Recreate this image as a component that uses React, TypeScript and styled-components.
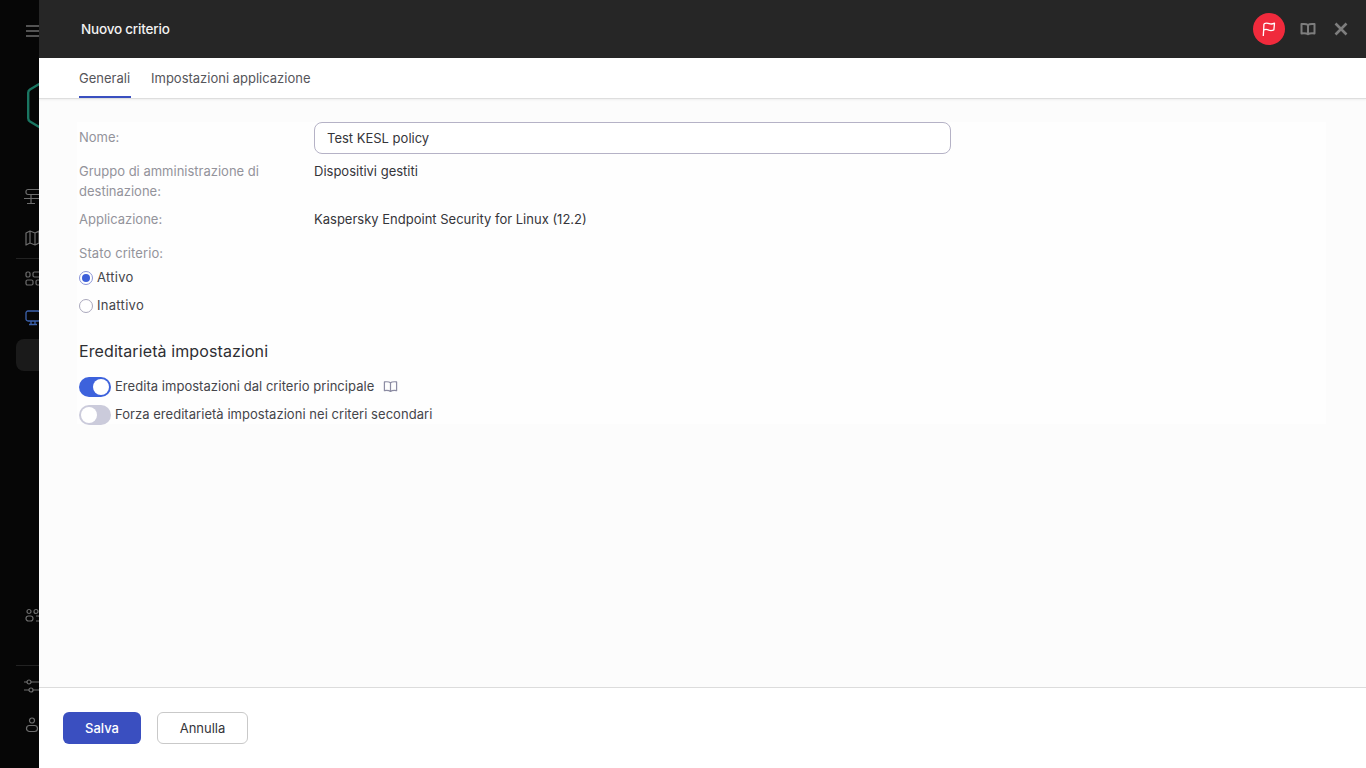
import React from "react";
import styled, { createGlobalStyle } from "styled-components";

const GlobalStyle = createGlobalStyle`
  html, body {
    margin: 0;
    padding: 0;
    height: 100%;
    overflow: hidden;
    background: #060606;
  }
  body {
    font-family: Inter, "Liberation Sans", sans-serif;
    font-size: 14px;
    line-height: 20px;
    color: #2a2a2e;
  }
  * { box-sizing: border-box; }
`;

const BookIcon = ({
  size = 16,
  color = "#7d7d7d",
  weight = 1.3,
}: {
  size?: number;
  color?: string;
  weight?: number;
}) => (
  <svg width={size} height={size} viewBox="0 0 16 16" fill="none" stroke={color} strokeWidth={weight}>
    <path d="M8 4C6.800 3 4 2.800 1.500 3.100v9.300C4 12.100 6.800 12.300 8 13.300c1.200-1 4-1.200 6.500-.9V3.100C12 2.800 9.200 3 8 4Z" strokeLinejoin="round" />
    <path d="M8 4v9.300" />
  </svg>
);

const FlagIcon = () => (
  <svg width="16" height="16" viewBox="0 0 16 16" fill="none" stroke="#fff" strokeWidth="1.300" strokeLinejoin="round">
    <path d="M2.300 15 3 2.800" />
    <path d="M3 2.800c2-1.200 3.600-.9 5.200-.2 1.700.7 3.400.5 5.300-.4l-.6 6.600c-1.900.9-3.500 1-5.100.3-1.700-.8-3.400-1-5.100-.1" />
  </svg>
);

const App = () => (
  <>
    <GlobalStyle />
    <Page>
      <Rail>
        <RailTop>
          <RailIcon $top={22}>
            <svg width="18" height="18" viewBox="0 0 18 18" stroke="#6e6e6e" strokeWidth="1.300">
              <path d="M2 4h14M2 9h14M2 14h14" />
            </svg>
          </RailIcon>
          <Logo>
            <svg width="36" height="54" viewBox="0 0 36 54" fill="none" stroke="#1a7561" strokeWidth="2.400">
              <path d="M26 -3 5 9.500a4 4 0 0 0-1.800 3.300v25.400a4 4 0 0 0 1.800 3.300L26 54" />
            </svg>
          </Logo>
          <RailIcon $top={58}>
            <svg width="18" height="18" viewBox="0 0 18 18" fill="none" stroke="#6e6e6e" strokeWidth="1.200">
              <rect x="2" y="1.500" width="16" height="5" rx="2" />
              <path d="M7 6.500v9M0 10.500h18M3 15.500h8" />
            </svg>
          </RailIcon>
          <RailIcon $top={23}>
            <svg width="18" height="18" viewBox="0 0 18 18" fill="none" stroke="#6e6e6e" strokeWidth="1.200">
              <path d="M2 4l4-2 5 2 4-2v12l-4 2-5-2-4 2ZM6 2v12M11 4v12" strokeLinejoin="round" />
            </svg>
          </RailIcon>
          <RailDivider $top={11} />
          <RailIcon $top={11}>
            <svg width="18" height="18" viewBox="0 0 18 18" fill="none" stroke="#6e6e6e" strokeWidth="1.200">
              <rect x="2" y="2" width="4" height="5" rx="1.500" />
              <rect x="9" y="2" width="8" height="5" rx="1.500" />
              <rect x="2" y="10" width="7" height="5" rx="1.500" />
              <rect x="12" y="10" width="5" height="5" rx="1.500" />
            </svg>
          </RailIcon>
          <RailIcon $top={21}>
            <svg width="18" height="18" viewBox="0 0 18 18" fill="none" stroke="#3c62ad" strokeWidth="1.300">
              <rect x="2" y="2" width="14" height="10" rx="2" />
              <path d="M7 12v3M11 12v3M5 15.500h8" />
            </svg>
          </RailIcon>
          <RailSelected />
        </RailTop>
        <RailBottom>
          <RailIcon $top={0}>
            <svg width="18" height="18" viewBox="0 0 18 18" fill="none" stroke="#6e6e6e" strokeWidth="1.200">
              <circle cx="5" cy="4.500" r="2" />
              <circle cx="12" cy="4.500" r="2" />
              <rect x="2" y="9" width="7" height="5" rx="2.500" />
              <path d="M12 9h2a2.500 2.500 0 0 1 0 5h-2" />
            </svg>
          </RailIcon>
          <RailDivider $top={40} />
          <RailIcon $top={11}>
            <svg width="18" height="18" viewBox="0 0 18 18" fill="none" stroke="#6e6e6e" strokeWidth="1.200">
              <path d="M0 5h3M7 5h11M0 13h5M9 13h9" />
              <circle cx="5" cy="5" r="2" />
              <circle cx="7" cy="13" r="2" />
            </svg>
          </RailIcon>
          <RailIcon $top={21}>
            <svg width="18" height="18" viewBox="0 0 18 18" fill="none" stroke="#6e6e6e" strokeWidth="1.200">
              <circle cx="8" cy="4.500" r="2.500" />
              <rect x="2.500" y="9.500" width="11" height="6" rx="3" />
            </svg>
          </RailIcon>
        </RailBottom>
      </Rail>
      <Drawer>
        <Header>
          <Title>Nuovo criterio</Title>
          <HeaderActions>
            <FlagButton>
              <FlagIcon />
            </FlagButton>
            <BookIcon size={16} color="#7d7d7d" weight={2} />
            <CloseIcon>
              <svg width="14" height="14" viewBox="0 0 14 14" stroke="#7d7d7d" strokeWidth="2.600">
                <path d="M1.500 1.500l11 11M12.500 1.500l-11 11" />
              </svg>
            </CloseIcon>
          </HeaderActions>
        </Header>
        <Tabs>
          <Tab $active>Generali</Tab>
          <Tab>Impostazioni applicazione</Tab>
        </Tabs>
        <Body>
          <Card>
            <FormGrid>
              <Label $pad={5}>Nome:</Label>
              <TextField defaultValue="Test KESL policy" />
              <Label>Gruppo di amministrazione di destinazione:</Label>
              <Value>Dispositivi gestiti</Value>
              <Label>Applicazione:</Label>
              <Value>Kaspersky Endpoint Security for Linux (12.2)</Value>
            </FormGrid>
            <StateLabel>Stato criterio:</StateLabel>
            <RadioGroup>
              <RadioRow>
                <Radio $checked />
                Attivo
              </RadioRow>
              <RadioRow>
                <Radio />
                Inattivo
              </RadioRow>
            </RadioGroup>
            <SectionTitle>Ereditarietà impostazioni</SectionTitle>
            <ToggleGroup>
              <ToggleRow>
                <Toggle $on />
                Eredita impostazioni dal criterio principale
                <HelpIcon>
                  <BookIcon size={15} color="#8c8ca3" />
                </HelpIcon>
              </ToggleRow>
              <ToggleRow>
                <Toggle />
                Forza ereditarietà impostazioni nei criteri secondari
              </ToggleRow>
            </ToggleGroup>
          </Card>
        </Body>
        <Footer>
          <PrimaryButton>Salva</PrimaryButton>
          <SecondaryButton>Annulla</SecondaryButton>
        </Footer>
      </Drawer>
    </Page>
  </>
);

const Page = styled.div`
  display: flex;
  width: 1366px;
  height: 768px;
  overflow: hidden;
`;

const Rail = styled.nav`
  flex: 0 0 39px;
  width: 39px;
  overflow: hidden;
  background: #060606;
  display: flex;
  flex-direction: column;
  justify-content: space-between;
`;

const RailTop = styled.div`
  display: flex;
  flex-direction: column;
`;

const RailBottom = styled.div`
  display: flex;
  flex-direction: column;
  padding-bottom: 34px;
`;

const RailIcon = styled.div<{ $top: number }>`
  display: flex;
  height: 18px;
  margin-top: ${(p) => p.$top}px;
  padding-left: 24px;
  flex-shrink: 0;
  svg {
    flex-shrink: 0;
  }
`;

const Logo = styled.div`
  display: flex;
  height: 50px;
  margin-top: 40px;
  padding-left: 25px;
  overflow: hidden;
  flex-shrink: 0;
  svg {
    flex-shrink: 0;
  }
`;

const RailDivider = styled.div<{ $top: number }>`
  height: 1px;
  margin: ${(p) => p.$top}px 0 0 16px;
  background: #222;
  flex-shrink: 0;
`;

const RailSelected = styled.div`
  height: 32px;
  margin: 12px 0 0 16px;
  border-radius: 8px 0 0 8px;
  background: #1a1a1a;
`;

const Drawer = styled.main`
  flex: 1;
  min-width: 0;
  display: flex;
  flex-direction: column;
  background: #fff;
`;

const Header = styled.header`
  height: 58px;
  flex-shrink: 0;
  background: #262626;
  display: flex;
  align-items: center;
  justify-content: space-between;
  padding: 0 18px 0 42px;
`;

const Title = styled.h1`
  margin: 0;
  font-size: 13.500px;
  font-weight: 500;
  letter-spacing: -0.2px;
  color: #f2f2f2;
`;

const HeaderActions = styled.div`
  display: flex;
  align-items: center;
  gap: 15px;
`;

const CloseIcon = styled.span`
  display: flex;
  margin-left: 3px;
`;

const FlagButton = styled.div`
  width: 32px;
  height: 32px;
  border-radius: 50%;
  background: #f02a3c;
  display: flex;
  align-items: center;
  justify-content: center;
`;

const Tabs = styled.div`
  height: 41px;
  flex-shrink: 0;
  display: flex;
  gap: 20px;
  padding-left: 40px;
  background: #fff;
  border-bottom: 1px solid #dedede;
  box-shadow: 0 1px 2px rgba(0, 0, 0, 0.06);
  position: relative;
`;

const Tab = styled.div<{ $active?: boolean }>`
  min-width: 52px;
  height: 40px;
  padding-top: 10px;
  font-size: 13px;
  color: #55555a;
  border-bottom: 2px solid ${(p) => (p.$active ? "#3a4fc0" : "transparent")};
`;

const Body = styled.div`
  flex: 1;
  min-height: 0;
  background: #fcfcfc;
  padding: 23px 40px 0 38px;
`;

const Card = styled.div`
  height: 302px;
  background: #fefefe;
  padding-left: 2px;
`;

const FormGrid = styled.div`
  display: grid;
  grid-template-columns: 235px 637px;
  row-gap: 8px;
`;

const Label = styled.div<{ $pad?: number }>`
  color: #93939b;
  font-size: 13px;
  width: 200px;
  padding-top: ${(p) => p.$pad ?? 0}px;
`;

const Value = styled.div`
  color: #35353a;
  font-size: 13px;
`;

const TextField = styled.input`
  width: 637px;
  height: 32px;
  margin-bottom: -1px;
  padding: 0 12px;
  border: 1px solid #b5b2c6;
  border-radius: 8px;
  outline: none;
  background: #fff;
  font: inherit;
  font-size: 13px;
  color: #35353a;
`;

const StateLabel = styled(Label)`
  margin-top: 14px;
  letter-spacing: 0.1px;
`;

const RadioGroup = styled.div`
  display: flex;
  flex-direction: column;
  gap: 8px;
  margin-top: 4px;
`;

const RadioRow = styled.label`
  display: flex;
  align-items: center;
  gap: 4px;
  height: 20px;
  font-size: 13px;
  letter-spacing: 0.3px;
  color: #45454a;
`;

const Radio = styled.span<{ $checked?: boolean }>`
  width: 14px;
  height: 14px;
  margin-top: 2px;
  border-radius: 50%;
  border: 1px solid ${(p) => (p.$checked ? "#8c96d8" : "#aaa8bc")};
  background: #fff;
  display: flex;
  align-items: center;
  justify-content: center;
  &::after {
    content: "";
    display: ${(p) => (p.$checked ? "block" : "none")};
    width: 8px;
    height: 8px;
    border-radius: 50%;
    background: #3d5fd9;
  }
`;

const SectionTitle = styled.h2`
  margin: 24px 0 0;
  font-size: 16px;
  line-height: 24px;
  font-weight: 400;
  letter-spacing: 0.1px;
  color: #2e2e33;
`;

const ToggleGroup = styled.div`
  display: flex;
  flex-direction: column;
  gap: 8px;
  margin-top: 13px;
`;

const ToggleRow = styled.div`
  display: flex;
  align-items: center;
  gap: 4px;
  height: 20px;
  font-size: 13px;
  letter-spacing: 0.04px;
  color: #45454a;
`;

const Toggle = styled.span<{ $on?: boolean }>`
  width: 32px;
  height: 20px;
  margin-top: 2px;
  flex-shrink: 0;
  border-radius: 10px;
  background: ${(p) => (p.$on ? "#3d62dc" : "#cbcbdb")};
  display: flex;
  align-items: center;
  justify-content: ${(p) => (p.$on ? "flex-end" : "flex-start")};
  padding: 2px;
  &::after {
    content: "";
    width: 16px;
    height: 16px;
    border-radius: 50%;
    background: #fff;
  }
`;

const HelpIcon = styled.span`
  display: flex;
  margin-left: 5px;
`;

const Footer = styled.footer`
  height: 81px;
  flex-shrink: 0;
  border-top: 1px solid #dcdcdc;
  background: #fff;
  display: flex;
  align-items: flex-start;
  gap: 16px;
  padding: 24px 0 0 24px;
`;

const PrimaryButton = styled.button`
  width: 78px;
  height: 32px;
  border: none;
  border-radius: 6px;
  background: #3a4fc0;
  color: #fff;
  font: inherit;
  font-size: 13px;
  font-weight: 500;
`;

const SecondaryButton = styled.button`
  width: 91px;
  height: 32px;
  border: 1px solid #c9c9c9;
  border-radius: 6px;
  background: #fff;
  color: #35353a;
  font: inherit;
  font-size: 13px;
`;

export default App;
